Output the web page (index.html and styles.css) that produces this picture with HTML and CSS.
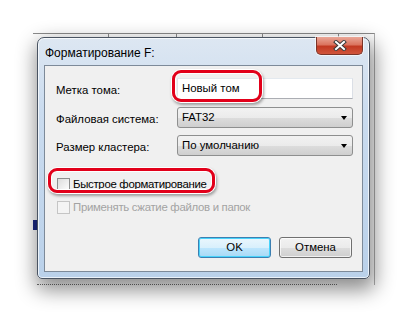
FILE: index.html
```html
<!DOCTYPE html>
<html lang="ru">
<head>
    <meta charset="UTF-8">
    <title>Форматирование F:</title>
    <link rel="stylesheet" href="styles.css">
</head>
<body>
    <div class="desk">
        <div class="backwin">
            <span class="tick t1"></span>
            <span class="tick t2"></span>
            <span class="tick t3"></span>
            <span class="tick t4"></span>
            <span class="side-blue"></span>
            <span class="dots"></span>
        </div>

        <div class="dialog">
            <div class="titlebar">
                <span class="title">Форматирование F:</span>
                <div class="close">
                    <svg width="14" height="11" viewBox="0 0 14 11">
                        <path d="M3 2 L11 9 M11 2 L3 9" stroke="#3a3a3a" stroke-width="4" stroke-linecap="square"/>
                        <path d="M3 2 L11 9 M11 2 L3 9" stroke="#ffffff" stroke-width="2" stroke-linecap="square"/>
                    </svg>
                </div>
            </div>

            <div class="client">
                <div class="row">
                    <span class="label">Метка тома:</span>
                    <div class="field">
                        <div class="textbox">Новый том</div>
                        <span class="ring ring-name"></span>
                    </div>
                </div>
                <div class="row row-fs">
                    <span class="label">Файловая система:</span>
                    <div class="field">
                        <div class="combo">FAT32<span class="arrow"></span></div>
                    </div>
                </div>
                <div class="row row-cl">
                    <span class="label">Размер кластера:</span>
                    <div class="field">
                        <div class="combo">По умолчанию<span class="arrow"></span></div>
                    </div>
                </div>

                <div class="check check-quick">
                    <span class="box"></span>
                    <span class="check-text">Быстрое форматирование</span>
                    <span class="ring ring-quick"></span>
                </div>
                <div class="check disabled">
                    <span class="box"></span>
                    <span class="check-text">Применять сжатие файлов и папок</span>
                </div>

                <div class="buttons">
                    <div class="btn btn-default">OK</div>
                    <div class="btn">Отмена</div>
                </div>
            </div>
        </div>
    </div>
</body>
</html>
```

FILE: styles.css
```css
body {
    margin: 0;
    background-color: #ffffff;
    font-family: 'Liberation Sans', Arial, sans-serif;
    font-size: 11.4px;
    color: #000000;
}

.desk {
    position: relative;
    width: 408px;
    height: 317px;
    padding: 37px 0 0 37px;
    box-sizing: border-box;
}

/* explorer window that peeks out behind the dialog */
.backwin {
    position: absolute;
    left: 33px;
    top: 33px;
    width: 341px;
    height: 251px;
    border-top: 1px solid #8c8c8c;
    border-right: 1px solid #b0b0b0;
}

.tick {
    position: absolute;
    top: 0;
    width: 1px;
    height: 4px;
    background-color: #8c8c8c;
}

.t1 { left: 75px; }
.t2 { left: 143px; }
.t3 { left: 229px; }
.t4 { left: 305px; }

.side-blue {
    position: absolute;
    left: 0;
    top: 186px;
    width: 4px;
    height: 10px;
    background-color: #1a2a86;
}

.dots {
    position: absolute;
    left: 4px;
    bottom: 0;
    width: 300px;
    border-bottom: 1px dotted #707070;
}

.dialog {
    position: relative;
    width: 333px;
    height: 242px;
    box-sizing: border-box;
    border: 1px solid #4a5462;
    border-radius: 7px 7px 5px 5px;
    background: linear-gradient(#dde7f2, #cbdcef 30%, #bad1ea);
    box-shadow: inset 0 0 0 1px rgba(255, 255, 255, 0.7), 2px 8px 20px 3px rgba(0, 0, 0, 0.45);
}

.titlebar {
    display: flex;
    height: 27px;
    padding-left: 7px;
}

.title {
    align-self: center;
    padding-top: 2px;
    font-size: 12px;
}

.close {
    display: flex;
    align-items: center;
    justify-content: center;
    width: 45px;
    height: 17px;
    margin: -1px 6px 0 auto;
    border: 1px solid #7a3428;
    border-top: none;
    border-radius: 0 0 5px 5px;
    background: linear-gradient(#e9a697, #db745f 45%, #c23922 55%, #d0553c);
    box-shadow: 0 0 0 1px rgba(255, 255, 255, 0.6);
}

.client {
    position: relative;
    width: 319px;
    height: 207px;
    margin-left: 6px;
    box-sizing: border-box;
    padding: 12px 9px 0 11px;
    border: 1px solid #7d8a99;
    background-color: #f0f0f0;
}

.row {
    display: flex;
    align-items: center;
    height: 21px;
}

.row-fs {
    margin-top: 8px;
}

.row-cl {
    margin-top: 7px;
}

.label {
    width: 121px;
    padding-top: 3px;
}

.field {
    position: relative;
    width: 176px;
    height: 21px;
}

.textbox {
    height: 21px;
    box-sizing: border-box;
    padding: 3px 4px;
    border: 1px solid #abadb3;
    border-top-color: #e3e9ef;
    border-left-color: #e2e3ea;
    border-right-color: #dbdfe6;
    background-color: #ffffff;
}

.combo {
    position: relative;
    height: 21px;
    box-sizing: border-box;
    padding: 3px 4px;
    border: 1px solid #8e8f8f;
    border-radius: 3px;
    background: linear-gradient(#f2f2f2, #ebebeb 50%, #dddddd 51%, #cfcfcf);
}

.arrow {
    position: absolute;
    right: 5px;
    top: 8px;
    border-left: 3.5px solid transparent;
    border-right: 3.5px solid transparent;
    border-top: 4px solid #000000;
}

.ring {
    position: absolute;
    box-sizing: border-box;
    border: 3px solid #e2001a;
    border-radius: 9px;
    box-shadow: inset 0 0 0 1px #ffffff, 0 0 0 1px #ffffff, 1px 2px 3px 1px rgba(0, 0, 0, 0.35);
}

.ring-name {
    left: -5px;
    top: -8px;
    width: 90px;
    height: 32px;
}

.check {
    position: relative;
    display: flex;
    align-items: center;
    height: 16px;
}

.check-text {
    letter-spacing: -0.3px;
}

.check-quick {
    margin-top: 20px;
}

.disabled {
    margin-top: 7px;
    color: #a3a3a3;
}

.box {
    width: 13px;
    height: 13px;
    margin: 0 3px 0 1px;
    box-sizing: border-box;
    border: 1px solid #8e8f8f;
    background: linear-gradient(135deg, #dcdcdc, #fdfdfd);
}

.disabled .box {
    border-color: #c5c5c5;
    background: #f4f4f4;
}

.ring-quick {
    left: -8px;
    top: -8px;
    width: 167px;
    height: 25px;
}

.buttons {
    display: flex;
    justify-content: flex-end;
    gap: 8px;
    margin-top: 22px;
    padding-right: 1px;
}

.btn {
    width: 73px;
    height: 21px;
    box-sizing: border-box;
    padding-top: 3px;
    text-align: center;
    border: 1px solid #707070;
    border-radius: 3px;
    background: linear-gradient(#f2f2f2, #ebebeb 50%, #dddddd 51%, #cfcfcf);
    box-shadow: inset 0 0 0 1px rgba(255, 255, 255, 0.7);
}

.btn-default {
    border-color: #3c7fb1;
    background: linear-gradient(#eaf6fd, #d9f0fc 50%, #bee6fd 51%, #a7d9f5);
    box-shadow: inset 0 0 0 1px #48d3fb;
}
```
